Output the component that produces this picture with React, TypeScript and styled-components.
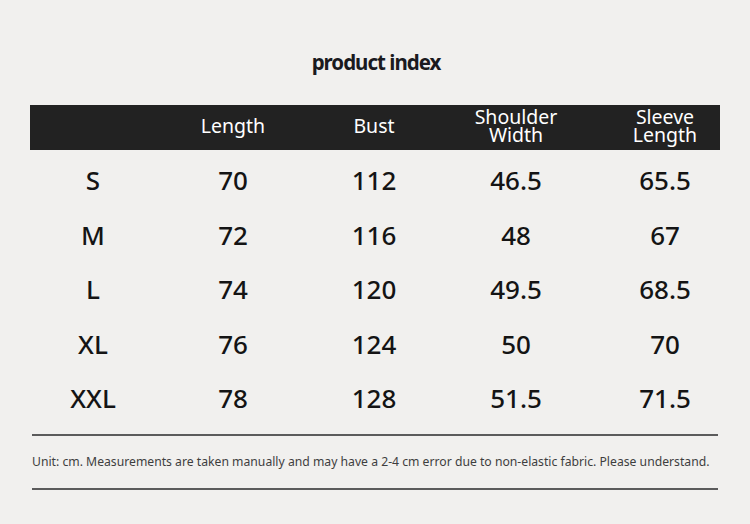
import styled, { createGlobalStyle } from "styled-components";

const GlobalStyle = createGlobalStyle`
  html, body {
    margin: 0;
    padding: 0;
    background: #f1f0ee;
  }
  body {
    font-family: "Noto Sans", "Open Sans", sans-serif;
  }
`;

const rows = [
  ["S", "70", "112", "46.5", "65.5"],
  ["M", "72", "116", "48", "67"],
  ["L", "74", "120", "49.5", "68.5"],
  ["XL", "76", "124", "50", "70"],
  ["XXL", "78", "128", "51.5", "71.5"],
];

const headers = ["", "Length", "Bust", "Shoulder\nWidth", "Sleeve\nLength"];

const App = () => {
  return (
    <Page>
      <GlobalStyle />
      <Title>product index</Title>
      <Table>
        <HeadRow>
          {headers.map((h, i) => (
            <HeadCell key={i} last={i === 4}>
              {h}
            </HeadCell>
          ))}
        </HeadRow>
        <Body>
          {rows.map((r) => (
            <Row key={r[0]}>
              {r.map((v, i) => (
                <Cell key={i} last={i === 4}>
                  {v}
                </Cell>
              ))}
            </Row>
          ))}
        </Body>
      </Table>
      <Rule gap={8} />
      <Note>
        Unit: cm. Measurements are taken manually and may have a 2-4 cm error due
        to non-elastic fabric. Please understand.
      </Note>
      <Rule gap={0} />
    </Page>
  );
};

const Page = styled.div`
  width: 750px;
  height: 524px;
  overflow: hidden;
  display: flex;
  flex-direction: column;
  align-items: center;
  padding-top: 48px;
  box-sizing: border-box;
`;

const Title = styled.h1`
  margin: 0;
  font-size: 20.5px;
  line-height: 28px;
  font-weight: 700;
  letter-spacing: -1px;
  color: #1a1a1e;
  transform: translateX(1px);
`;

const Table = styled.div`
  margin-top: 29px;
  width: 690px;
`;

const cols = "126px 154px 128px 156px 126px";

const HeadRow = styled.div`
  display: grid;
  grid-template-columns: ${cols};
  height: 45px;
  background: #222222;
  align-items: center;
`;

const HeadCell = styled.div<{ last?: boolean }>`
  color: #ffffff;
  font-size: 19.5px;
  line-height: 18px;
  text-align: center;
  white-space: pre-line;
  padding-bottom: 3px;
  padding-left: ${(p) => (p.last ? "16px" : "0")};
`;

const Body = styled.div`
  padding-top: 3px;
`;

const Row = styled.div`
  display: grid;
  grid-template-columns: ${cols};
  height: 54.5px;
  align-items: center;
`;

const Cell = styled.div<{ last?: boolean }>`
  font-size: 26px;
  font-weight: 500;
  color: #141414;
  text-align: center;
  padding-left: ${(p) => (p.last ? "16px" : "0")};
`;

const Rule = styled.div<{ gap: number }>`
  width: 686px;
  height: 2px;
  background: #5b5b5b;
  margin-top: ${(p) => p.gap}px;
`;

const Note = styled.p`
  margin: 0;
  width: 686px;
  height: 52px;
  line-height: 52px;
  font-size: 12.2px;
  color: #3e3e3e;
  white-space: nowrap;
`;

export default App;
